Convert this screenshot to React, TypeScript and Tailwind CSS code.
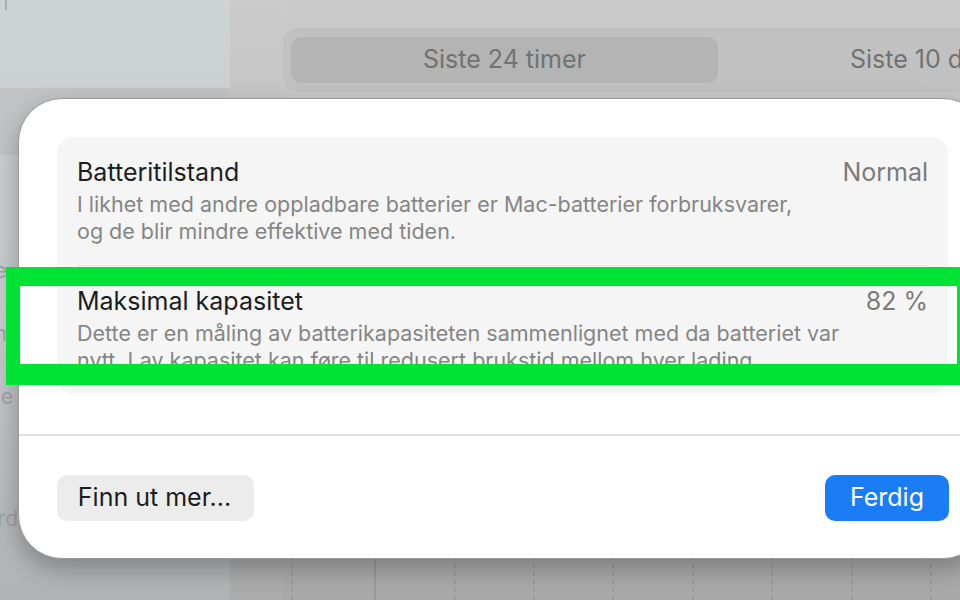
import React from "react";

// ends of sidebar labels that peek out left of the sheet
const sidebarTails = [
  { text: "e", top: "mt-[104px]", w: "w-[7px]" },
  { text: "n", top: "mt-[39px]", w: "w-[7px]" },
  { text: "e", top: "mt-[39px]", w: "w-[13px]" },
  { text: "rd", top: "mt-[98px]", w: "w-[18px]" },
];

const gridLines = [292, 375, 455, 534, 613, 693, 772, 852, 931];

const Row = ({
  title,
  value,
  lines,
}: {
  title: string;
  value: string;
  lines: string[];
}) => (
  <div className="flex h-[128px] flex-col px-5 pt-[20px]">
    <div className="flex items-baseline justify-between">
      <span className="text-[25px] leading-[30px] text-[#1d1d1f]">{title}</span>
      <span className="text-[25px] leading-[30px] text-[#7a7a7a]">{value}</span>
    </div>
    <div className="mt-[4px]">
      {lines.map((l) => (
        <p key={l} className="whitespace-nowrap text-[21.5px] leading-[27px] text-[#858585]">
          {l}
        </p>
      ))}
    </div>
  </div>
);

export default function App() {
  return (
    <div className="relative h-[600px] w-[960px] overflow-hidden font-['Inter','Noto_Sans',sans-serif]">
      {/* window behind the sheet */}
      <div className="flex h-full">
        <aside className="flex w-[230px] shrink-0 flex-col bg-gradient-to-b from-[#cdd2d5] via-[#c6cacd] to-[#b0b2b4]">
          <div className="h-[88px]">
            <div className="ml-[5px] h-[10px] w-[2px] bg-[#a9acaf]" />
          </div>
          <div className="h-[67px] bg-[#c2c3c4]" />
          {sidebarTails.map((s, i) => (
            <div
              key={i}
              className={`${s.top} ${s.w} flex shrink-0 justify-end whitespace-nowrap text-[21px] leading-[24px] text-[#9ea1a4]`}
            >
              {s.text}
            </div>
          ))}
        </aside>
        <div className="w-[53px] shrink-0 bg-gradient-to-b from-[#cbcbcb] to-[#ababab]" />
        <main className="flex min-w-0 flex-1 flex-col overflow-hidden bg-gradient-to-b from-[#cacaca] via-[#c2c2c2] to-[#a8a8a8]">
          <div className="mt-[28px] flex h-[64px] items-center rounded-l-[14px] bg-[#c1c1c1] pl-2">
            <div className="flex h-[46px] w-[427px] shrink-0 items-center justify-center rounded-[10px] bg-[#b4b4b4] text-[25px] text-[#727272]">
              Siste 24 timer
            </div>
            <div className="ml-[132px] shrink-0 whitespace-nowrap text-[25px] text-[#727272]">
              Siste 10 dager
            </div>
          </div>
          <div className="flex-1" />
          <svg width="677" height="60" className="block shrink-0">
            {gridLines.map((x, i) => (
              <line
                key={x}
                x1={x - 283}
                x2={x - 283}
                y1="0"
                y2="60"
                stroke="#969696"
                strokeWidth="1.5"
                strokeDasharray={i === 1 ? undefined : "4 4"}
              />
            ))}
          </svg>
        </main>
      </div>

      {/* sheet */}
      <div className="absolute left-[18px] top-[98px] flex h-[461px] w-[969px] flex-col rounded-[44px] border border-[#9a9a9a] bg-white shadow-[0_10px_24px_rgba(0,0,0,0.28)]">
        <div className="px-[38px] pt-[38px]">
          <div className="flex flex-col rounded-[16px] bg-[#f5f5f5]">
            <Row
              title="Batteritilstand"
              value="Normal"
              lines={[
                "I likhet med andre oppladbare batterier er Mac-batterier forbruksvarer,",
                "og de blir mindre effektive med tiden.",
              ]}
            />
            <div className="mx-5 h-px bg-[#e4e4e4]" />
            <Row
              title="Maksimal kapasitet"
              value="82 %"
              lines={[
                "Dette er en måling av batterikapasiteten sammenlignet med da batteriet var",
                "nytt. Lav kapasitet kan føre til redusert brukstid mellom hver lading.",
              ]}
            />
          </div>
        </div>
        <div className="mt-[40px] h-[2px] bg-[#e2e2e2]" />
        <div className="flex items-center justify-between pl-[38px] pr-[37px] pt-[39px]">
          <button className="h-[46px] w-[197px] rounded-[10px] bg-[#ececec] pr-[2px] text-[25px] text-[#1d1d1f]">
            Finn ut mer...
          </button>
          <button className="h-[46px] w-[124px] rounded-[10px] bg-[#1a7df6] text-[25px] text-white">
            Ferdig
          </button>
        </div>
      </div>

      {/* highlight frame */}
      <div className="absolute left-[6px] top-[267px] h-[118px] w-[970px] border-b-[21px] border-l-[14px] border-r-[19px] border-t-[19px] border-[#00e234]" />
    </div>
  );
}
